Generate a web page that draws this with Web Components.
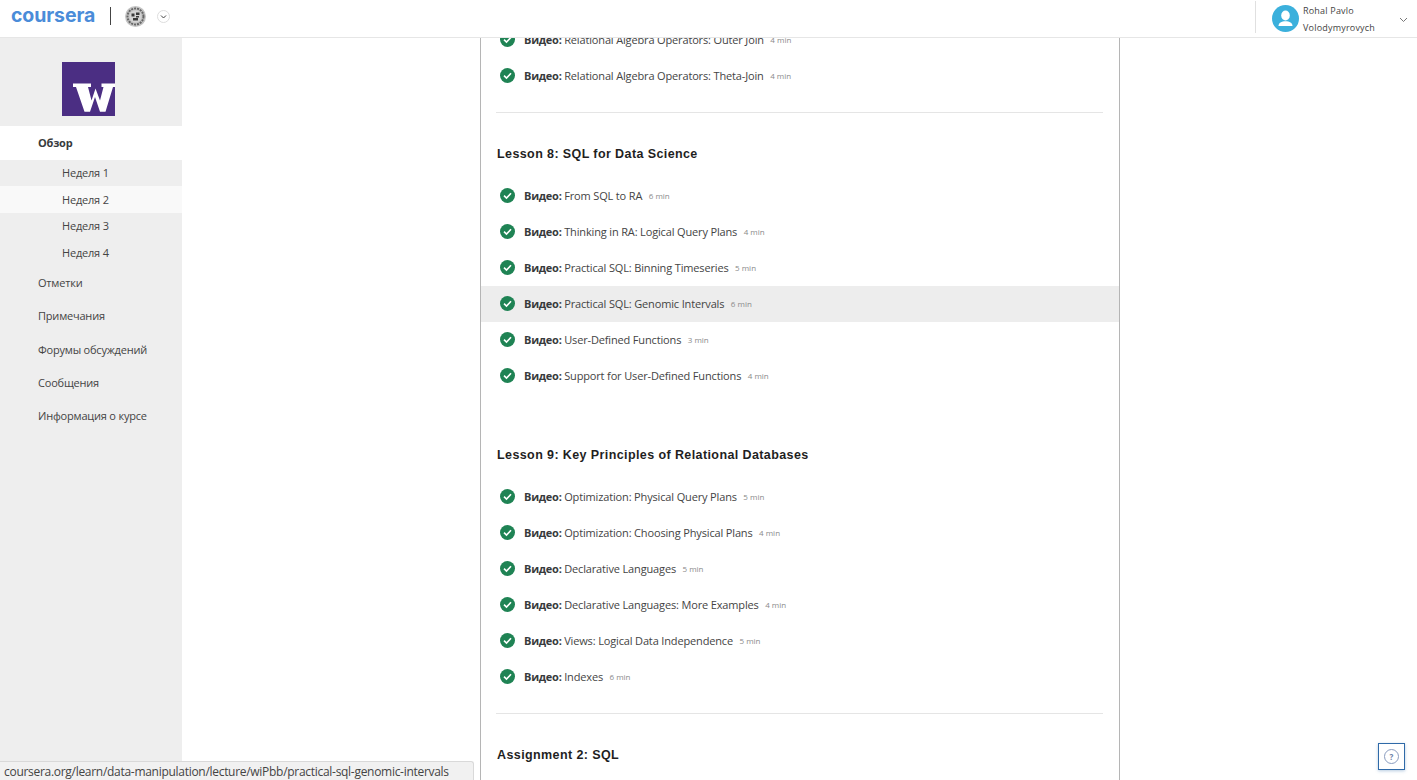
<!DOCTYPE html>
<html lang="ru">
<head>
<meta charset="utf-8">
<title>Coursera</title>
<style>
  html, body { margin: 0; height: 100%; overflow: hidden; background: #fff; }
  body { font-family: "Open Sans", "Noto Sans", sans-serif; color: #373a3c; }
</style>
</head>
<body>
<app-shell>
  <top-bar slot="top"></top-bar>
  <side-nav slot="side">
    <nav-item bold active>Обзор</nav-item>
    <nav-item sub>Неделя 1</nav-item>
    <nav-item sub current>Неделя 2</nav-item>
    <nav-item sub>Неделя 3</nav-item>
    <nav-item sub>Неделя 4</nav-item>
    <nav-item>Отметки</nav-item>
    <nav-item>Примечания</nav-item>
    <nav-item>Форумы обсуждений</nav-item>
    <nav-item>Сообщения</nav-item>
    <nav-item>Информация о курсе</nav-item>
  </side-nav>
  <syllabus-column slot="main">
    <lesson-item time="4 min">Relational Algebra Operators: Outer Join</lesson-item>
    <lesson-item time="4 min">Relational Algebra Operators: Theta-Join</lesson-item>
    <lesson-rule></lesson-rule>
    <lesson-title>Lesson 8: SQL for Data Science</lesson-title>
    <lesson-item time="6 min">From SQL to RA</lesson-item>
    <lesson-item time="4 min">Thinking in RA: Logical Query Plans</lesson-item>
    <lesson-item time="5 min">Practical SQL: Binning Timeseries</lesson-item>
    <lesson-item time="6 min" hover>Practical SQL: Genomic Intervals</lesson-item>
    <lesson-item time="3 min">User-Defined Functions</lesson-item>
    <lesson-item time="4 min">Support for User-Defined Functions</lesson-item>
    <lesson-title spaced>Lesson 9: Key Principles of Relational Databases</lesson-title>
    <lesson-item time="5 min">Optimization: Physical Query Plans</lesson-item>
    <lesson-item time="4 min">Optimization: Choosing Physical Plans</lesson-item>
    <lesson-item time="5 min">Declarative Languages</lesson-item>
    <lesson-item time="4 min">Declarative Languages: More Examples</lesson-item>
    <lesson-item time="5 min">Views: Logical Data Independence</lesson-item>
    <lesson-item time="6 min">Indexes</lesson-item>
    <lesson-rule></lesson-rule>
    <lesson-title>Assignment 2: SQL</lesson-title>
  </syllabus-column>
  <status-link slot="over">coursera.org/learn/data-manipulation/lecture/wiPbb/practical-sql-genomic-intervals</status-link>
  <help-button slot="over"></help-button>
</app-shell>

<script>
class AppShell extends HTMLElement {
    constructor() {
        super();
        this.attachShadow({ mode: "open" });
        this.shadowRoot.innerHTML = `
        <style>
            :host { display: flex; flex-direction: column; height: 780px; position: relative; overflow: hidden; }
            .body { flex: 1; display: flex; min-height: 0; }
            .side { width: 182px; flex: none; background: #eee; }
            .main { flex: 1; display: flex; padding-left: 298px; overflow: hidden; }
        </style>
        <slot name="top"></slot>
        <div class="body">
            <div class="side"><slot name="side"></slot></div>
            <div class="main"><slot name="main"></slot></div>
        </div>
        <slot name="over"></slot>`;
    }
}

class TopBar extends HTMLElement {
    constructor() {
        super();
        this.attachShadow({ mode: "open" });
        this.shadowRoot.innerHTML = `
        <style>
            :host { display: flex; align-items: center; height: 37px; flex: none; border-bottom: 1px solid #e6e6e6; background: #fff; padding: 0 9px 0 11px; box-sizing: content-box; }
            .logo { font: 700 19.5px/1 "Inter", "Liberation Sans", sans-serif; color: #4a8cd9; width: 85px; letter-spacing: -.1px; margin-top: -6px; white-space: nowrap; }
            .bar { width: 1px; height: 18px; background: #444; margin: -5px 14px 0 14px; }
            .seal { width: 21px; height: 21px; margin-top: -5px; display: block; }
            .more { width: 13px; height: 13px; margin: -5px 0 0 11px; display: block; }
            .gap { flex: 1; }
            .user { display: flex; align-items: center; height: 32px; border-left: 1px solid #e0e0e0; padding-left: 16px; margin-top: -4px; }
            .face { width: 27px; height: 27px; display: block; margin-right: 4px; margin-top: 4px; }
            .name { font-size: 9px; line-height: 17px; color: #444; width: 96px; margin-top: 5px; letter-spacing: .2px; }
            .chev { width: 9px; height: 6px; display: block; margin-top: 7px; }
        </style>
        <div class="logo">coursera</div>
        <div class="bar"></div>
        <svg class="seal" viewBox="0 0 21 21">
            <circle cx="10.5" cy="10.5" r="10.5" fill="#c4c4c4"/>
            <circle cx="10.5" cy="10.5" r="8" fill="none" stroke="#666" stroke-width="2" stroke-dasharray="2 1"/>
            <circle cx="10.5" cy="10.5" r="6" fill="#d4d4d4"/>
            <path d="M6.5 7.5h3v3h-3zM11 6.5h3.5v2.500H11zM8 12h5v2.500H8zM11 10h3v1.500h-3z" fill="#3a3a3a"/>
        </svg>
        <svg class="more" viewBox="0 0 13 13">
            <circle cx="6.500" cy="6.500" r="6" fill="#fff" stroke="#ddd"/>
            <path d="M4 5.500l2.500 2.500L9 5.500" fill="none" stroke="#444" stroke-width="1"/>
        </svg>
        <div class="gap"></div>
        <div class="user">
            <svg class="face" viewBox="0 0 27 27">
                <circle cx="13.500" cy="13.500" r="13.500" fill="#3bb0dc"/>
                <ellipse cx="13.500" cy="10.500" rx="4.300" ry="5" fill="#fff"/>
                <path d="M6.500 21c0-3.200 3-4.800 7-4.800s7 1.600 7 4.800z" fill="#fff"/>
            </svg>
            <div class="name">Rohal Pavlo<br>Volodymyrovych</div>
            <svg class="chev" viewBox="0 0 9 6"><path d="M1 1l3.500 3.500L8 1" fill="none" stroke="#777"/></svg>
        </div>`;
    }
}

class SideNav extends HTMLElement {
    constructor() {
        super();
        this.attachShadow({ mode: "open" });
        this.shadowRoot.innerHTML = `
        <style>
            :host { display: block; }
            .crest { display: flex; justify-content: flex-start; padding: 24px 0 10px 62px; }
            svg { width: 53px; height: 54px; display: block; }
        </style>
        <div class="crest">
            <svg viewBox="0 0 53 54">
                <rect width="53" height="54" fill="#4b2e83"/>
                <path d="M11 21.500H29V25H26L29.500 38.500L33.500 26.500L38 38.500L41.500 25H39.500V21.500H53V25H51L43.500 49.700H38L33 35L28 49.700H22.500L14 25H11Z" fill="#fff"/>
            </svg>
        </div>
        <slot></slot>`;
    }
}

class NavItem extends HTMLElement {
    constructor() {
        super();
        this.attachShadow({ mode: "open" });
        this.shadowRoot.innerHTML = `
        <style>
            :host { display: flex; align-items: center; box-sizing: border-box; height: 33.4px; padding: 0 0 .8px 38px; font-size: 11px; letter-spacing: -.2px; color: #444; }
            :host([active]) { background: #fff; height: 34px; padding-bottom: 1.500px; }
            :host([bold]) { font-weight: 700; color: #373a3c; }
            :host([sub]) { height: 26.500px; padding-left: 62px; }
            :host([current]) { background: #f9f9f9; height: 27px; margin-top: -.5px; }
        </style>
        <slot></slot>`;
    }
}

class SyllabusColumn extends HTMLElement {
    constructor() {
        super();
        this.attachShadow({ mode: "open" });
        this.shadowRoot.innerHTML = `
        <style>
            :host { display: block; width: 640px; flex: none; box-sizing: border-box; border: solid #b5b5b5; border-width: 0 1px; }
            .scroll { margin-top: -16px; }
        </style>
        <div class="scroll"><slot></slot></div>`;
    }
}

class LessonItem extends HTMLElement {
    static get observedAttributes() {
        return ["time"];
    }

    constructor() {
        super();
        this.attachShadow({ mode: "open" });
        this.shadowRoot.innerHTML = `
        <style>
            :host { display: flex; align-items: center; box-sizing: border-box; height: 36px; padding: 0 0 2px 19px; font-size: 11px; letter-spacing: -.15px; color: #444; }
            :host([hover]) { background: #ededed; }
            svg { width: 15px; height: 15px; flex: none; margin-right: 9px; display: block; }
            b { color: #373a3c; letter-spacing: -.25px; margin-right: 2.600px; }
            .time { font-size: 8px; letter-spacing: 0; color: #8a8a8a; margin-left: 6.500px; }
        </style>
        <svg viewBox="0 0 15 15">
            <circle cx="7.500" cy="7.500" r="7.500" fill="#1f8354"/>
            <path d="M4 7.700l2.500 2.400L11 5.300" fill="none" stroke="#fff" stroke-width="1.600"/>
        </svg>
        <b>Видео:</b><span><slot></slot></span><span class="time"></span>`;
    }

    connectedCallback() {
        this.updateContent();
    }

    attributeChangedCallback() {
        this.updateContent();
    }

    updateContent() {
        this.shadowRoot.querySelector(".time").textContent = this.getAttribute("time");
    }
}

class LessonRule extends HTMLElement {
    constructor() {
        super();
        this.attachShadow({ mode: "open" });
        this.shadowRoot.innerHTML = `
        <style>
            :host { display: block; height: 1px; background: #e5e5e5; margin: 18px 16px 0 15px; }
        </style>`;
    }
}

class LessonTitle extends HTMLElement {
    constructor() {
        super();
        this.attachShadow({ mode: "open" });
        this.shadowRoot.innerHTML = `
        <style>
            :host { display: flex; align-items: center; box-sizing: border-box; height: 22px; padding: 1px 0 0 16px; margin: 29px 0 14px;
                font: 700 12.5px "Liberation Sans", Arial, sans-serif; letter-spacing: .4px; color: #1f1f1f; }
            :host([spaced]) { margin-top: 49px; }
        </style>
        <slot></slot>`;
    }
}

class StatusLink extends HTMLElement {
    constructor() {
        super();
        this.attachShadow({ mode: "open" });
        this.shadowRoot.innerHTML = `
        <style>
            :host { position: absolute; left: 0; bottom: 0; width: 474px; height: 19px; box-sizing: border-box;
                background: #f1f1f1; border: solid #d9d9d9; border-width: 1px 1px 0 0; border-top-right-radius: 3px;
                padding: 1px 0 0 4px; font: 12px/18px "Open Sans", sans-serif; letter-spacing: -.29px; color: #444; white-space: nowrap; overflow: hidden; }
        </style>
        <slot></slot>`;
    }
}

class HelpButton extends HTMLElement {
    constructor() {
        super();
        this.attachShadow({ mode: "open" });
        this.shadowRoot.innerHTML = `
        <style>
            :host { position: absolute; left: 1378px; top: 743px; width: 27px; height: 27px; box-sizing: border-box;
                border: 1px solid #2f6aa8; background: #fff; display: flex; align-items: center; justify-content: center;
                box-shadow: 0 1px 3px rgba(47,106,168,.35); }
            .ring { width: 15px; height: 15px; box-sizing: border-box; border: 1px solid #8a9cbf; border-radius: 50%;
                font: 700 8px/13px "Open Sans", sans-serif; color: #6b7fa6; text-align: center; }
        </style>
        <div class="ring">?</div>`;
    }
}

customElements.define("app-shell", AppShell);
customElements.define("top-bar", TopBar);
customElements.define("side-nav", SideNav);
customElements.define("nav-item", NavItem);
customElements.define("syllabus-column", SyllabusColumn);
customElements.define("lesson-item", LessonItem);
customElements.define("lesson-rule", LessonRule);
customElements.define("lesson-title", LessonTitle);
customElements.define("status-link", StatusLink);
customElements.define("help-button", HelpButton);
</script>
</body>
</html>
